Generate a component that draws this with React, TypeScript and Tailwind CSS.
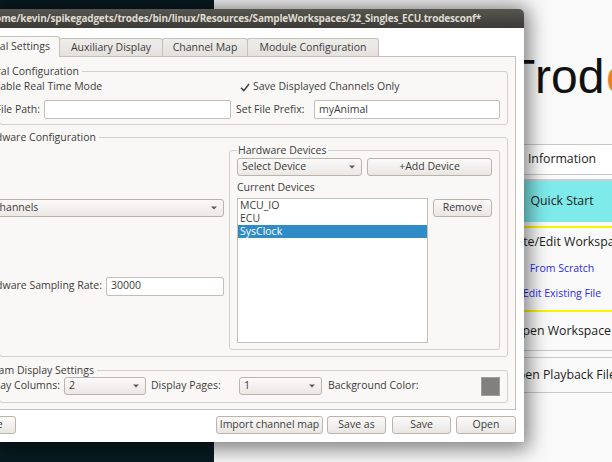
import React from 'react';

const ui = "font-['Open_Sans',sans-serif] text-[10.5px] text-[#3c3c3c]";

const Arrow = () => (
  <svg width="6" height="4" viewBox="0 0 6 4" className="shrink-0">
    <path d="M0 0.5h6L3 3.5z" fill="#5a5a5a" />
  </svg>
);

const Combo = ({ value, className = '', textClass = 'pl-[4px]' }: { value: string; className?: string; textClass?: string }) => (
  <div className={`h-[18px] flex items-center rounded-[3px] border border-[#bab4ad] bg-gradient-to-b from-[#fbfaf9] to-[#ebe8e5] pr-[6px] ${className}`}>
    <span className={`flex-1 whitespace-nowrap ${textClass}`}>{value}</span>
    <Arrow />
  </div>
);

const Button = ({ label, className = '' }: { label: string; className?: string }) => (
  <div className={`h-[18px] flex items-center justify-center rounded-[3px] border border-[#bab4ad] bg-gradient-to-b from-[#fbfaf9] to-[#e9e6e2] whitespace-nowrap ${className}`}>
    {label}
  </div>
);

const Input = ({ value = '', className = '' }: { value?: string; className?: string }) => (
  <div className={`h-[19px] flex items-center rounded-[2px] border border-[#c3beb8] bg-white pl-[4px] ${className}`}>
    {value}
  </div>
);

// left part of these labels is cut by the screen edge, so they are right aligned and overflow left
const EndLabel = ({ text, w }: { text: string; w: string }) => (
  <div className={`${w} shrink-0 flex justify-end`}>
    <span className="shrink-0 whitespace-nowrap">{text}</span>
  </div>
);

const Group = ({ title, titleBox, className = '', children }: { title: string; titleBox: string; className?: string; children: React.ReactNode }) => (
  <div className={`relative border border-[#d3cfca] rounded-[3px] ${className}`}>
    <div className={`absolute top-[-8px] left-0 h-[14px] leading-[14px] flex justify-end pr-[3px] bg-[#faf8f6] ${titleBox}`}>
      <span className="shrink-0 whitespace-nowrap">{title}</span>
    </div>
    {children}
  </div>
);

const Check = () => (
  <svg width="10" height="9" viewBox="0 0 10 9" className="shrink-0">
    <path d="M1 4.8L3.8 7.6L9 1" fill="none" stroke="#3c3c3c" strokeWidth="1.5" />
  </svg>
);

export default function App() {
  return (
    <div className="relative w-[612px] h-[462px] overflow-hidden bg-[#081b22]">
      {/* Trodes main window */}
      <div className="absolute left-[214px] top-0 w-[398px] h-[462px] overflow-hidden bg-[#fafafa] flex flex-col font-['Open_Sans',sans-serif] text-[#1c1c1c]">
        <div className="mt-[50px] ml-[292px] h-[54px] leading-[54px] text-[48px] font-['Liberation_Sans',sans-serif] whitespace-nowrap text-[#111] flex">
          <span className="w-[29px] shrink-0">T</span>
          <span className="w-[71px] shrink-0">rod</span>
          <span className="shrink-0 text-[#e8822a]">es</span>
        </div>
        <div className="mt-[40px] ml-[198px] w-[300px] flex flex-col text-[12.3px]">
          <div className="h-[31px] flex items-center justify-center border border-[#c8c8c8] bg-white">Information</div>
          <div className="mt-[4px] h-[43px] flex items-center justify-center border-t-2 border-[#cdcdcd] bg-[#7eeaea]">Quick Start</div>
          <div className="mt-[4px] h-[86px] flex flex-col items-center border-y-2 border-[#f5f500] pt-[5px]">
            <div className="h-[17px] leading-[17px]">Create/Edit Workspace</div>
            <div className="mt-[11px] h-[14px] leading-[14px] text-[10.5px] text-[#2a2af0]">From Scratch</div>
            <div className="mt-[11px] h-[14px] leading-[14px] text-[10.5px] text-[#2a2af0]">Edit Existing File</div>
          </div>
          <div className="h-[39px] flex items-center justify-center border-b border-[#c8c8c8]">Open Workspace</div>
          <div className="mt-[6px] h-[36px] flex items-center justify-center border-y border-[#c8c8c8]">Open Playback File</div>
        </div>
      </div>

      {/* workspace editor dialog */}
      <div className={`absolute left-0 top-[9px] w-[524px] h-[433px] flex flex-col rounded-tr-[5px] overflow-hidden bg-white shadow-[0_2px_20px_5px_rgba(0,0,0,0.5)] ${ui}`}>
        <div className="h-[19px] shrink-0 flex items-center justify-end pr-[43px] bg-gradient-to-b from-[#56554f] to-[#3c3b37]">
          <span className="shrink-0 whitespace-nowrap font-bold text-[10px] tracking-[-0.2px] text-[#dfdbd2]">
            /home/kevin/spikegadgets/trodes/bin/linux/Resources/SampleWorkspaces/32_Singles_ECU.trodesconf*
          </span>
        </div>

        <div className="flex-1 flex flex-col pt-[8px]">
          {/* tabs */}
          <div className="relative z-10 h-[20px] flex items-end">
            <div className="ml-[-40px] w-[100px] h-[21px] mb-[-1px] flex items-center justify-end pr-[9px] rounded-t-[3px] border border-b-0 border-[#c4c0bb] bg-[#faf8f6]">
              <span className="shrink-0 whitespace-nowrap">General Settings</span>
            </div>
            <div className="ml-[-1px] w-[104px] h-[18px] flex items-center justify-center rounded-t-[3px] border border-b-0 border-[#c4c0bb] bg-gradient-to-b from-[#efedea] to-[#e4e1dd]">Auxiliary Display</div>
            <div className="ml-[-1px] w-[86px] h-[18px] flex items-center justify-center rounded-t-[3px] border border-b-0 border-[#c4c0bb] bg-gradient-to-b from-[#efedea] to-[#e4e1dd]">Channel Map</div>
            <div className="ml-[-1px] w-[132px] h-[18px] flex items-center justify-center rounded-t-[3px] border border-b-0 border-[#c4c0bb] bg-gradient-to-b from-[#efedea] to-[#e4e1dd]">Module Configuration</div>
          </div>

          {/* tab pane */}
          <div className="ml-[-2px] w-[518px] h-[354px] flex flex-col border border-[#c4c0bb] bg-[#faf8f6] pt-[14px] pr-[7px]">
            <Group title="General Configuration" titleBox="w-[82px]" className="h-[54px]">
              <div className="flex flex-col pr-[7px]">
                <div className="mt-[8px] h-[14px] flex items-center">
                  <div className="w-[240px] flex items-center">
                    <span className="ml-[-12px] whitespace-nowrap">Enable Real Time Mode</span>
                  </div>
                  <Check />
                  <span className="ml-[3px] whitespace-nowrap">Save Displayed Channels Only</span>
                </div>
                <div className="mt-[6px] h-[19px] flex items-center">
                  <EndLabel text="File Path:" w="w-[40px]" />
                  <Input className="ml-[4px] w-[187px]" />
                  <span className="ml-[5px] w-[73px] whitespace-nowrap">Set File Prefix:</span>
                  <Input className="ml-[5px] w-[186px]" value="myAnimal" />
                </div>
              </div>
            </Group>

            <Group title="Hardware Configuration" titleBox="w-[99px]" className="mt-[12px] h-[220px]">
              <div className="flex pt-[12px]">
                <div className="w-[224px] flex flex-col">
                  <Combo value="Channels" className="mt-[49px] ml-[-10px] w-[234px]" textClass="pl-[2px]" />
                  <div className="mt-[60px] h-[18px] flex items-center">
                    <EndLabel text="Hardware Sampling Rate:" w="w-[102px]" />
                    <Input className="ml-[4px] w-[118px] h-[18px]" value="30000" />
                  </div>
                </div>
                <div className="relative ml-[5px] w-[271px] h-[200px] flex flex-col border border-[#d3cfca] rounded-[3px] px-[7px] pt-[7px]">
                  <div className="absolute top-[-8px] left-[7px] h-[14px] leading-[14px] px-[1px] bg-[#faf8f6] whitespace-nowrap">Hardware Devices</div>
                  <div className="flex">
                    <Combo value="Select Device" className="w-[125px]" />
                    <Button label="+Add Device" className="ml-[5px] flex-1" />
                  </div>
                  <div className="mt-[4px] h-[14px] leading-[14px]">Current Devices</div>
                  <div className="mt-[4px] flex items-start">
                    <div className="w-[191px] h-[145px] flex flex-col border border-[#c3beb8] bg-white">
                      <div className="h-[13px] leading-[13px] pl-[2px]">MCU_IO</div>
                      <div className="h-[13px] leading-[13px] pl-[2px]">ECU</div>
                      <div className="h-[13px] leading-[13px] pl-[2px] bg-[#308cc6] text-white">SysClock</div>
                    </div>
                    <Button label="Remove" className="ml-[5px] mt-[1px] w-[59px]" />
                  </div>
                </div>
              </div>
            </Group>

            <Group title="Stream Display Settings" titleBox="w-[97px]" className="mt-[13px] h-[33px]">
              <div className="mt-[6px] h-[18px] flex items-center pr-[7px]">
                <EndLabel text="Display Columns:" w="w-[60px]" />
                <Combo value="2" className="ml-[4px] w-[82px]" />
                <span className="ml-[5px] w-[88px] whitespace-nowrap">Display Pages:</span>
                <Combo value="1" className="w-[83px]" />
                <span className="ml-[6px] flex-1 whitespace-nowrap">Background Color:</span>
                <div className="w-[19px] h-[19px] border border-[#a09c98] bg-[#808080]" />
              </div>
            </Group>
          </div>

          {/* dialog buttons */}
          <div className="mt-[6px] flex items-center pr-[8px]">
            <Button label="Close" className="ml-[-37px] w-[53px]" />
            <div className="flex-1" />
            <Button label="Import channel map" className="w-[107px]" />
            <Button label="Save as" className="ml-[4px] w-[59px]" />
            <Button label="Save" className="ml-[6px] w-[59px]" />
            <Button label="Open" className="ml-[5px] w-[60px]" />
          </div>
        </div>
      </div>
    </div>
  );
}
